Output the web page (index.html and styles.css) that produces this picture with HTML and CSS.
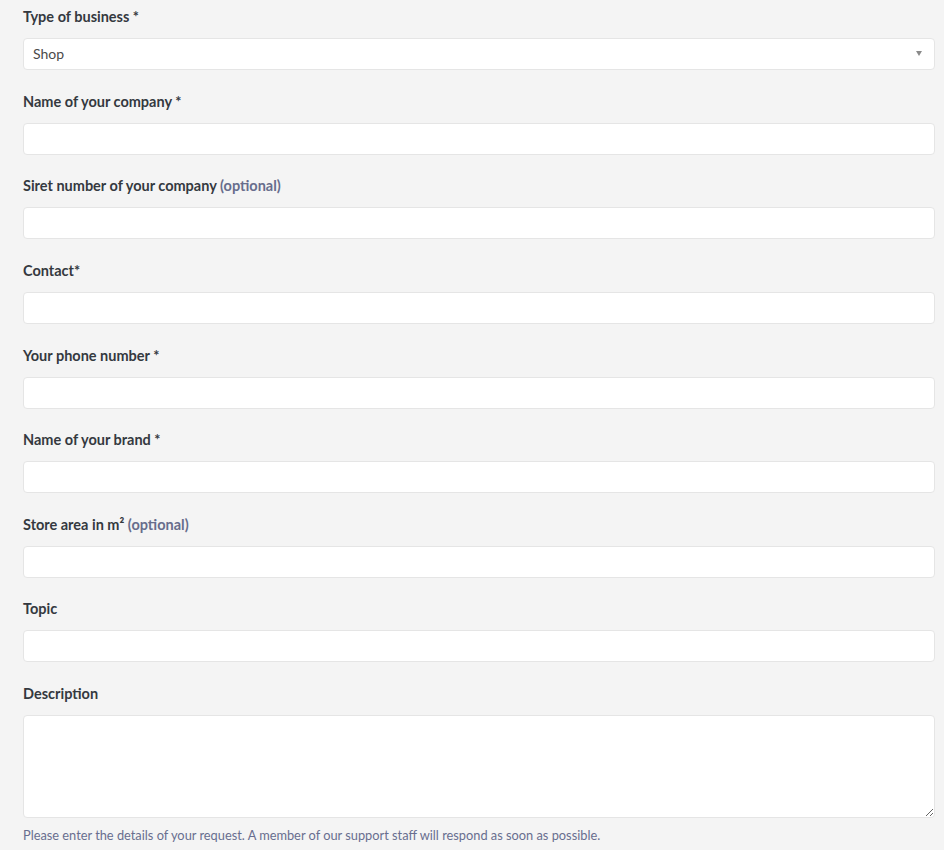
FILE: index.html
```html
<!DOCTYPE html>
<html lang="en">
  <head>
    <meta charset="UTF-8" />
    <meta name="viewport" content="width=device-width, initial-scale=1.0" />
    <title>Request form</title>
    <link rel="stylesheet" href="styles.css">
  </head>
  <body>
    <form class="request-form">
      <div class="field">
        <label for="business">Type of business *</label>
        <div class="select-wrap">
          <select id="business">
            <option>Shop</option>
          </select>
        </div>
      </div>
      <div class="field">
        <label for="company">Name of your company *</label>
        <input type="text" id="company" />
      </div>
      <div class="field">
        <label for="siret">Siret number of your company <span class="optional">(optional)</span></label>
        <input type="text" id="siret" />
      </div>
      <div class="field">
        <label for="contact">Contact*</label>
        <input type="text" id="contact" />
      </div>
      <div class="field">
        <label for="phone">Your phone number *</label>
        <input type="text" id="phone" />
      </div>
      <div class="field">
        <label for="brand">Name of your brand *</label>
        <input type="text" id="brand" />
      </div>
      <div class="field">
        <label for="area">Store area in m² <span class="optional">(optional)</span></label>
        <input type="text" id="area" />
      </div>
      <div class="field">
        <label for="topic">Topic</label>
        <input type="text" id="topic" />
      </div>
      <div class="field">
        <label for="description">Description</label>
        <textarea id="description"></textarea>
        <p class="hint">Please enter the details of your request. A member of our support staff will respond as soon as possible.</p>
      </div>
    </form>
  </body>
</html>
```

FILE: styles.css
```css
body {
  margin: 0;
  background: #f4f4f4;
  font-family: Lato, "Open Sans", sans-serif;
  color: #34393f;
}
.request-form {
  padding: 7px 9px 0 23px;
}
.field {
  margin-bottom: 21.625px;
}
.field label {
  display: block;
  font-size: 14.5px;
  font-weight: 700;
  line-height: 20px;
  margin-bottom: 11px;
}
.optional {
  color: #676d8c;
}
/* campos de texto y select con el mismo aspecto */
.field input,
.field select,
.field textarea {
  display: block;
  width: 100%;
  box-sizing: border-box;
  height: 32px;
  border: 1px solid #e5e5e5;
  border-radius: 4px;
  background: #fff;
  font-family: inherit;
  font-size: 14px;
  color: #4a4a4a;
  padding: 0 9px;
  outline: none;
}
.select-wrap {
  position: relative;
}
.field select {
  appearance: none;
  -webkit-appearance: none;
  padding-bottom: 2px;
}
/* flecha del select */
.select-wrap::after {
  content: "";
  position: absolute;
  right: 13px;
  top: 13px;
  border-left: 3px solid transparent;
  border-right: 3px solid transparent;
  border-top: 5px solid #8a8a8a;
}
.field textarea {
  height: 103px;
  padding: 8px 9px;
  resize: vertical;
}
.hint {
  margin: 8px 0 0;
  font-size: 12.8px;
  line-height: 18px;
  color: #686e8f;
}
```
